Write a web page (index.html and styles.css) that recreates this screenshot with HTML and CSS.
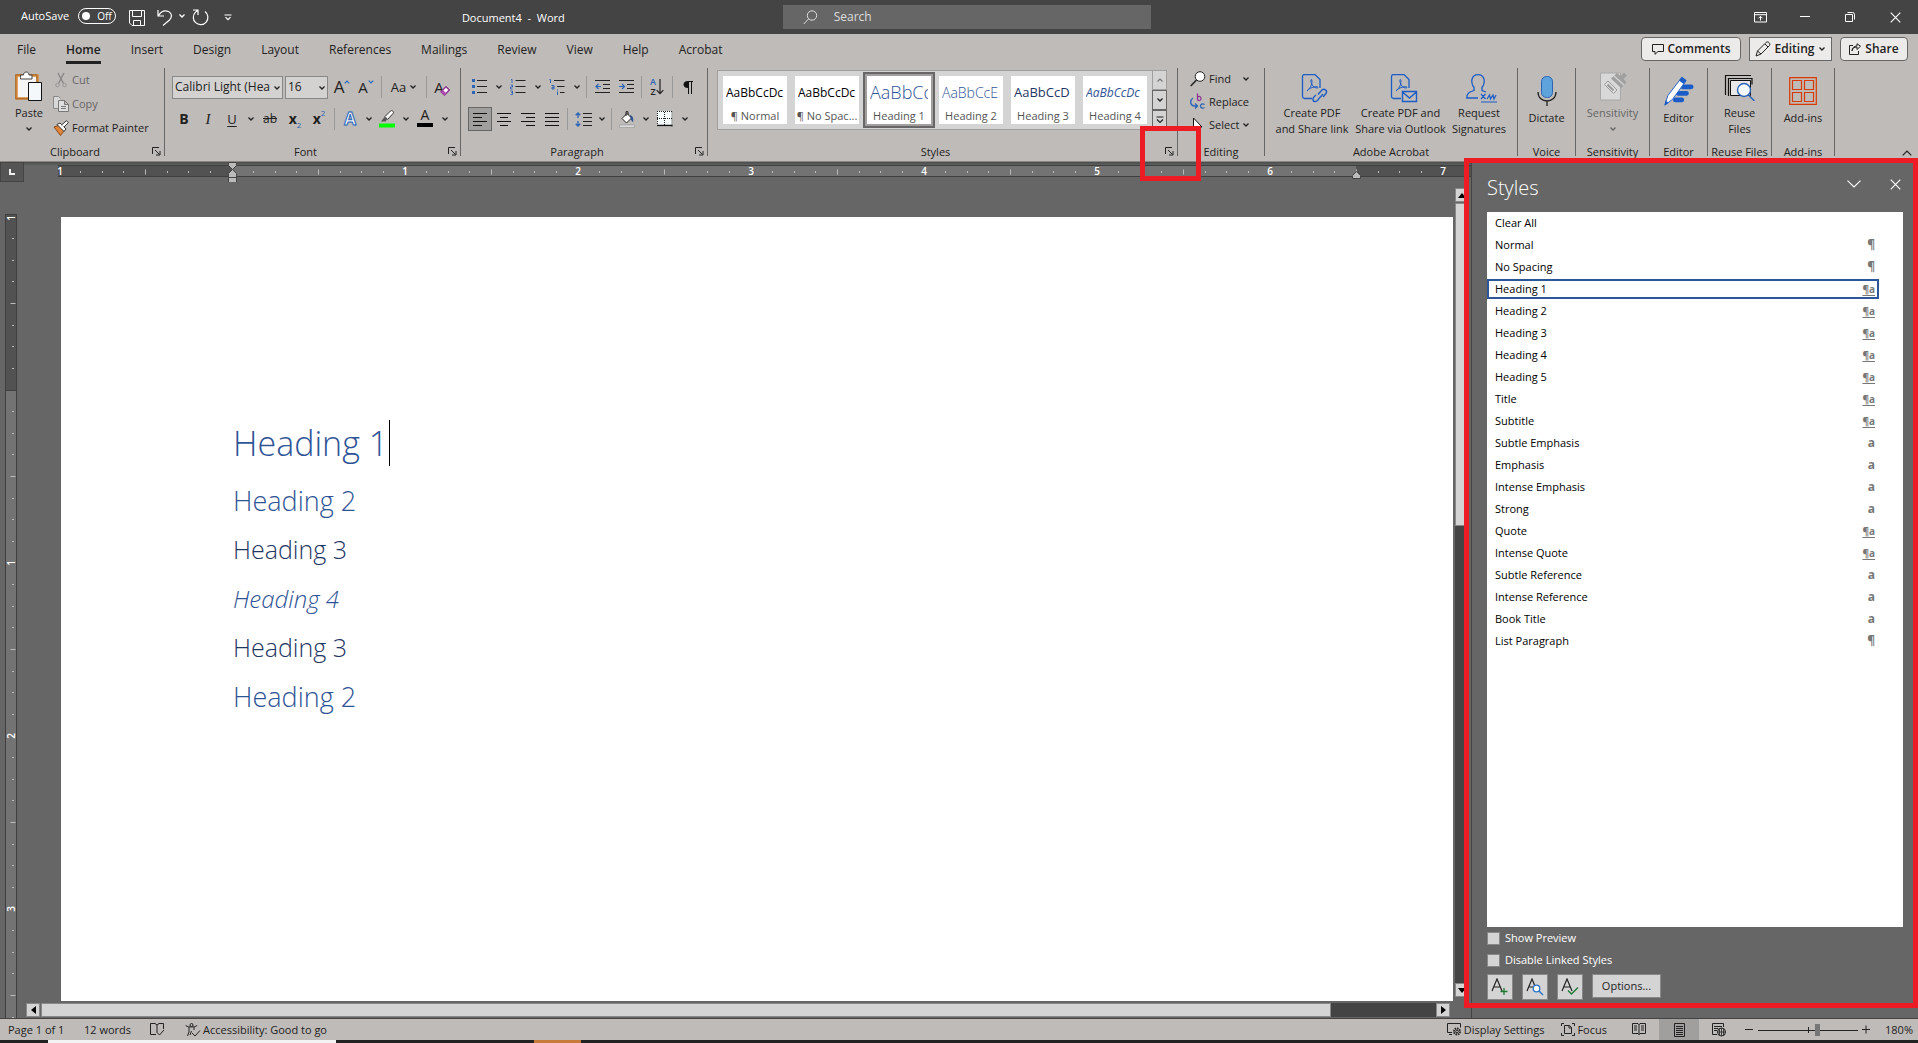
FILE: index.html
```html
<!DOCTYPE html>
<html lang="en">
<head>
    <meta charset="UTF-8">
    <meta name="viewport" content="width=device-width, initial-scale=1.0">
    <title>Document4 - Word</title>
    <link rel="stylesheet" href="styles.css">
</head>
<body>
    <!-- Shared icons -->
    <svg class="defs" width="0" height="0">
        <symbol id="chev" viewBox="0 0 8 6"><path d="M1.5 1.5 4 4l2.5-2.5" fill="none" stroke="currentColor" stroke-width="1.3"/></symbol>
        <symbol id="launch" viewBox="0 0 9 9"><path d="M.5 7V.5H7M3 3l4.5 4.5M8 4v4H4" fill="none" stroke="currentColor"/></symbol>
        <symbol id="close" viewBox="0 0 11 11"><path d="M.7.7l9.6 9.6M10.3.7.7 10.3" fill="none" stroke="currentColor" stroke-width="1.1"/></symbol>
        <symbol id="pdf" viewBox="0 0 28 30">
            <path d="M11 24.5H3.5a2 2 0 0 1-2-2v-20a2 2 0 0 1 2-2H14l5 5V14" fill="none" stroke="currentColor" stroke-width="1.3"/>
            <path d="M6 17c4-3 5.500-8 4.800-11-.5-1.500-1.600 0-.6 2.500 1 3.500 3 5.500 6 5.500 1.500 0 1-1.400-1-1.300-3 .2-6 1.300-8.700 3.300" fill="none" stroke="currentColor"/>
        </symbol>
    </svg>

    <header class="titlebar">
        <div class="quick">
            <span class="autosave">AutoSave</span>
            <button class="toggle"><i></i>Off</button>
            <button class="qbtn" aria-label="Save"><svg width="16" height="16" viewBox="0 0 16 16"><path d="M.5.5h15v15H3l-2.500-2.500zM3.500.5v6h9v-6M4.500 15.500v-5h7v5" fill="none" stroke="#fff"/></svg></button>
            <button class="qbtn" aria-label="Undo"><svg width="16" height="17" viewBox="0 0 16 17"><path d="M1 1v6h6M1.500 6.500C4 2.500 8 1 11.500 2.500c4 2 3.500 6 1 8.500L6 16.500" fill="none" stroke="#fff" stroke-width="1.200"/></svg></button>
            <button class="arrow" aria-label="Undo list"><svg width="8" height="6"><use href="#chev"/></svg></button>
            <button class="qbtn" aria-label="Redo"><svg width="17" height="17" viewBox="0 0 17 17"><path d="M1 1h5v5M13 2.500a7.300 7.300 0 1 1-9.500.6L6 1" fill="none" stroke="#fff" stroke-width="1.200"/></svg></button>
            <button class="qbtn" aria-label="Customize"><svg width="8" height="7" viewBox="0 0 8 7"><path d="M.5 1h7M1.500 3.200 4 5.700l2.500-2.500" fill="none" stroke="#fff" stroke-width="1.200"/></svg></button>
            <span class="doc-name">Document4&nbsp; - &nbsp;Word</span>
        </div>
        <label class="search">
            <svg width="15" height="15" viewBox="0 0 15 15"><circle cx="9" cy="5.500" r="4.700" fill="none" stroke="#ddd"/><path d="M5.500 9 .7 14" stroke="#ddd"/></svg>
            <input type="text" placeholder="Search" aria-label="Search">
        </label>
        <div class="window-btns">
            <button aria-label="Ribbon options"><svg width="13" height="11" viewBox="0 0 13 11"><path d="M.5.5h12v9.500H.5zM.5 2.700h12M6.500 8.500V4.500M4.500 6.300l2-2 2 2" fill="none" stroke="#fff"/></svg></button>
            <button aria-label="Minimize"><svg width="10" height="2" viewBox="0 0 10 2"><path d="M0 .5h10" stroke="#fff"/></svg></button>
            <button aria-label="Restore"><svg width="10" height="10" viewBox="0 0 10 10"><path d="M.5 2.500h7v7h-7zM2.500.5h5a2 2 0 0 1 2 2v5" fill="none" stroke="#fff"/></svg></button>
            <button aria-label="Close"><svg width="11" height="11"><use href="#close"/></svg></button>
        </div>
    </header>

    <nav class="tabs">
        <a href="#">File</a>
        <a href="#" class="active">Home</a>
        <a href="#">Insert</a>
        <a href="#">Design</a>
        <a href="#">Layout</a>
        <a href="#">References</a>
        <a href="#">Mailings</a>
        <a href="#">Review</a>
        <a href="#">View</a>
        <a href="#">Help</a>
        <a href="#">Acrobat</a>
        <div class="tab-actions">
            <button class="comments"><svg width="12" height="11" viewBox="0 0 12 11"><path d="M.5.5h11v7H6L3 10.300V7.500H.5z" fill="none" stroke="#222"/></svg>Comments</button>
            <button class="mode"><svg width="16" height="16" viewBox="0 0 16 16"><path d="M1 15l1.500-5L11 1.500c2-2 5 1.500 3.500 3L6 13zM2.500 10 6 13M10 3l3 3" fill="none" stroke="#222"/></svg>Editing<svg width="8" height="6"><use href="#chev"/></svg></button>
            <button class="share"><svg width="12" height="12" viewBox="0 0 12 12"><path d="M4 2.500H.5v9h9V8M3 8c.5-3 2-4 5-4v2.500l3.500-3.300L8 .7V3C5 3 3 5 3 8z" fill="none" stroke="#222"/></svg>Share</button>
        </div>
    </nav>

    <section class="ribbon">
        <div class="group clipboard">
            <div class="group-body">
                <button class="big paste">
                    <svg width="28" height="30" viewBox="0 0 28 30"><path d="M1.500 4.500h21v23h-21z" fill="#f5f5f5" stroke="#d4893b" stroke-width="2.500"/><path d="M.7 3.700h21v24H.7z" fill="none" stroke="#9b5a1f" stroke-width=".7"/><path d="M5.500 6.500V4h3c0-4 5.500-4 5.500 0h3v4h-11.500z" fill="#fff" stroke="#444"/><path d="M13.500 11.500h13v18h-13z" fill="#f5f8fa" stroke="#111"/></svg>
                    Paste
                    <svg width="8" height="6"><use href="#chev"/></svg>
                </button>
                <div class="stack">
                    <button class="small off"><svg width="16" height="16" viewBox="0 0 16 16"><path d="M5 1l5.500 10.500M11 1 5.500 11.500" stroke="#888" fill="none" stroke-width="1.400"/><circle cx="4.500" cy="13" r="1.800" fill="none" stroke="#999"/><circle cx="11.500" cy="13" r="1.800" fill="none" stroke="#999"/></svg>Cut</button>
                    <button class="small off"><svg width="16" height="16" viewBox="0 0 16 16"><path d="M5.500 12.500h-5V.5h5l2 2" fill="#d8d8d8" stroke="#888"/><path d="M5.500 4.500h6l4 4v7h-10zM11.500 4.500v4h4M8 10.500h5M8 12.500h5" fill="#e0e0e0" stroke="#777"/></svg>Copy</button>
                    <button class="small"><svg width="16" height="16" viewBox="0 0 16 16"><path d="M1 7l6-2 4 6-3.500 4.500z" fill="#e0853a" stroke="#8a4a18"/><path d="M4 4.500 7 3l6 6-2 2.500z" fill="#fff" stroke="#333"/><path d="M8.500 5 13.500.7l1.800 2L11 7" fill="#fff" stroke="#333"/></svg>Format Painter</button>
                </div>
            </div>
            <div class="group-name">Clipboard<button class="launcher" aria-label="Clipboard settings"><svg width="9" height="9"><use href="#launch"/></svg></button></div>
        </div>

        <div class="group font">
            <div class="rows">
                <div class="row">
                    <span class="combo combo-font"><select aria-label="Font"><option>Calibri Light (Hea</option></select><svg width="8" height="6"><use href="#chev"/></svg></span>
                    <span class="combo combo-size"><select aria-label="Font size"><option>16</option></select><svg width="8" height="6"><use href="#chev"/></svg></span>
                    <button class="tool glyph"><b class="big-a">A</b><svg class="up" width="6" height="4" viewBox="0 0 6 4"><path d="M.7 3.300 3 1l2.300 2.300" fill="none" stroke="#2b6cc4" stroke-width="1.200"/></svg></button>
                    <button class="tool glyph"><b class="small-a">A</b><svg class="up" width="6" height="4" viewBox="0 0 6 4"><path d="M.7.7 3 3 5.300.7" fill="none" stroke="#2b6cc4" stroke-width="1.200"/></svg></button>
                    <i class="sep"></i>
                    <button class="tool case">Aa<svg width="8" height="6"><use href="#chev"/></svg></button>
                    <i class="sep"></i>
                    <button class="tool glyph clear-fmt"><b class="small-a">A</b><svg width="10" height="10" viewBox="0 0 10 10"><path d="M6 .8 9.300 4 4.500 9 1 5.800z" fill="#fff" stroke="#8d2d91" stroke-width="1.300"/><path d="M3 4l3.300 3.300L4.500 9 1 5.800z" fill="#b14fb5"/></svg></button>
                </div>
                <div class="row">
                    <button class="tool bold">B</button>
                    <button class="tool italic">I</button>
                    <button class="tool under">U</button>
                    <button class="arrow" aria-label="Underline styles"><svg width="8" height="6"><use href="#chev"/></svg></button>
                    <button class="tool wide strike">ab</button>
                    <button class="tool bold">x<sub>2</sub></button>
                    <button class="tool bold">x<sup>2</sup></button>
                    <i class="sep"></i>
                    <button class="tool effect">A</button>
                    <button class="arrow" aria-label="Text effects"><svg width="8" height="6"><use href="#chev"/></svg></button>
                    <button class="tool" aria-label="Highlight"><svg width="16" height="18" viewBox="0 0 16 18"><path d="M6 6.500 11.500 1c1.500-1.300 4 1 2.500 2.500L8.500 9.500z" fill="#fff" stroke="#333"/><path d="M5.500 7 8 9.500l-1.500 2H2z" fill="#555"/><path d="M0 13.500h16v4H0z" fill="#0f0"/></svg></button>
                    <button class="arrow" aria-label="Highlight colors"><svg width="8" height="6"><use href="#chev"/></svg></button>
                    <button class="tool wide color-a">A</button>
                    <button class="arrow" aria-label="Font colors"><svg width="8" height="6"><use href="#chev"/></svg></button>
                </div>
            </div>
            <div class="group-name">Font<button class="launcher" aria-label="Font settings"><svg width="9" height="9"><use href="#launch"/></svg></button></div>
        </div>

        <div class="group para">
            <div class="rows">
                <div class="row">
                    <button class="tool" aria-label="Bullets"><svg width="16" height="16" viewBox="0 0 16 16"><path d="M0 0h3v3H0zM0 6h3v3H0zM0 12h3v3H0z" fill="#2b63b5"/><path d="M5 1.500h10M5 7.500h10M5 13.500h10" stroke="#222"/></svg></button>
                    <button class="arrow" aria-label="Bullet styles"><svg width="8" height="6"><use href="#chev"/></svg></button>
                    <button class="tool wide" aria-label="Numbering"><svg width="16" height="16" viewBox="0 0 16 16"><path d="M1 .5h1V4M.5 6h2v2h-2v2h2M.5 12h2v1.500h-1 1v2h-2" fill="none" stroke="#2b63b5" stroke-width=".9"/><path d="M5.500 1.500h10M5.500 7.500h10M5.500 13.500h10" stroke="#222"/></svg></button>
                    <button class="arrow" aria-label="Number styles"><svg width="8" height="6"><use href="#chev"/></svg></button>
                    <button class="tool wide" aria-label="Multilevel list"><svg width="16" height="17" viewBox="0 0 16 17"><path d="M.5.5h1V4M2.500 6.500h2.500V10H3V8.300h2M8.500 12.500V16M8.500 10.500v1" fill="none" stroke="#2b63b5"/><path d="M5 1.500h10.500M8 7.500h7.500M11 13.500h4.500" stroke="#222"/></svg></button>
                    <button class="arrow" aria-label="List styles"><svg width="8" height="6"><use href="#chev"/></svg></button>
                    <i class="sep"></i>
                    <button class="tool" aria-label="Decrease indent"><svg width="15" height="14" viewBox="0 0 15 14"><path d="M0 .5h15M8 4.500h7M8 8.500h7M0 12.500h15" stroke="#222"/><path d="M6 6.500H1M3.500 4 1 6.500 3.500 9" fill="none" stroke="#2b63b5" stroke-width="1.200"/></svg></button>
                    <button class="tool" aria-label="Increase indent"><svg width="15" height="14" viewBox="0 0 15 14"><path d="M0 .5h15M8 4.500h7M8 8.500h7M0 12.500h15" stroke="#222"/><path d="M0 6.500h5.500M3 4l2.500 2.500L3 9" fill="none" stroke="#2b63b5" stroke-width="1.200"/></svg></button>
                    <i class="sep"></i>
                    <button class="tool sort" aria-label="Sort"><span><b>A</b><b>Z</b></span><svg width="8" height="16" viewBox="0 0 8 16"><path d="M4 0v14.500M.7 11.200 4 14.700l3.300-3.500" fill="none" stroke="#222" stroke-width="1.200"/></svg></button>
                    <i class="sep"></i>
                    <button class="tool" aria-label="Show marks"><svg width="10" height="13" viewBox="0 0 10 13"><path d="M5 0h5v1H9v12H8V1H6v12H5V7C-1 7-1 0 5 0z" fill="#111"/></svg></button>
                </div>
                <div class="row">
                    <button class="tool pressed" aria-label="Align left"><svg width="14" height="13" viewBox="0 0 14 13"><path d="M0 .5h14M0 4.500h9M0 8.500h14M0 12.500h9" stroke="#111"/></svg></button>
                    <button class="tool" aria-label="Center"><svg width="14" height="13" viewBox="0 0 14 13"><path d="M0 .5h14M3 4.500h8M0 8.500h14M3 12.500h8" stroke="#111"/></svg></button>
                    <button class="tool" aria-label="Align right"><svg width="14" height="13" viewBox="0 0 14 13"><path d="M0 .5h14M5 4.500h9M0 8.500h14M5 12.500h9" stroke="#111"/></svg></button>
                    <button class="tool" aria-label="Justify"><svg width="14" height="13" viewBox="0 0 14 13"><path d="M0 .5h14M0 4.500h14M0 8.500h14M0 12.500h14" stroke="#111"/></svg></button>
                    <i class="sep"></i>
                    <button class="tool" aria-label="Line spacing"><svg width="17" height="15" viewBox="0 0 17 15"><path d="M3 1v5M3 9v5M.7 3.300 3 1l2.300 2.300M.7 11.700 3 14l2.300-2.300" fill="none" stroke="#2b63b5" stroke-width="1.300"/><path d="M8 1.500h9M8 5.500h9M8 9.500h9M8 13.500h9" stroke="#222"/></svg></button>
                    <button class="arrow" aria-label="Spacing options"><svg width="8" height="6"><use href="#chev"/></svg></button>
                    <i class="sep"></i>
                    <button class="tool" aria-label="Shading"><svg width="16" height="17" viewBox="0 0 16 17"><path d="M3 7.500 8 2.500l4.500 4.500L7.500 12z" fill="#fff" stroke="#222"/><path d="M7 5V.7h2V4" fill="none" stroke="#222"/><path d="M11 4.500c2.500.5 3 2.500 2.700 6L12 8" fill="#2b4f8f" stroke="#2b4f8f"/><path d="M.5 14h15v2.500H.5z" fill="#ddd" stroke="#999" stroke-width=".7"/></svg></button>
                    <button class="arrow" aria-label="Shading colors"><svg width="8" height="6"><use href="#chev"/></svg></button>
                    <button class="tool wide" aria-label="Borders"><svg width="16" height="16" viewBox="0 0 16 16"><path d="M0 0h15.500v15.500H0z" fill="#f5fafa"/><path d="M0 .5h15M.5 0v15M15 .5v15M7.500 1v14M0 7.500h15" stroke="#222" stroke-dasharray="1 1"/><path d="M0 14.500h15.500" stroke="#111" stroke-width="1.500"/></svg></button>
                    <button class="arrow" aria-label="Border options"><svg width="8" height="6"><use href="#chev"/></svg></button>
                </div>
            </div>
            <div class="group-name">Paragraph<button class="launcher" aria-label="Paragraph settings"><svg width="9" height="9"><use href="#launch"/></svg></button></div>
        </div>

        <div class="group styles">
            <div class="gallery">
                <button class="style"><span><em>AaBbCcDc</em>¶ Normal</span></button>
                <button class="style"><span><em>AaBbCcDc</em>¶ No Spac...</span></button>
                <button class="style selected"><span><em class="s1">AaBbCc</em>Heading 1</span></button>
                <button class="style"><span><em class="s2">AaBbCcE</em>Heading 2</span></button>
                <button class="style"><span><em class="s3">AaBbCcD</em>Heading 3</span></button>
                <button class="style"><span><em class="s4">AaBbCcDc</em>Heading 4</span></button>
                <div class="gallery-nav">
                    <button class="dim" aria-label="Previous"><svg width="8" height="6" viewBox="0 0 8 6"><path d="M1.500 4.500 4 2l2.500 2.500" fill="none" stroke="currentColor" stroke-width="1.200"/></svg></button>
                    <button aria-label="Next"><svg width="8" height="6"><use href="#chev"/></svg></button>
                    <button aria-label="More"><svg width="8" height="8" viewBox="0 0 8 8"><path d="M.5 1h7M1 3.500l3 3 3-3" fill="none" stroke="currentColor" stroke-width="1.200"/></svg></button>
                </div>
            </div>
            <div class="group-name">Styles<button class="launcher" aria-label="Styles pane"><svg width="9" height="9"><use href="#launch"/></svg></button></div>
            <div class="callout"></div>
        </div>

        <div class="group editing">
            <div class="stack">
                <button class="small"><svg width="16" height="16" viewBox="0 0 16 16"><circle cx="10" cy="5.500" r="4.800" fill="#fff" stroke="#222"/><path d="M6.500 9 .7 15" stroke="#222" stroke-width="1.500"/></svg>Find<svg class="far" width="8" height="6"><use href="#chev"/></svg></button>
                <button class="small"><svg width="16" height="17" viewBox="0 0 16 17"><path d="M7.500.5v7M7.500 4.500c1-1.500 3.500-1.500 3.500 1s-2.500 2.500-3.500 1" fill="none" stroke="#8d2d91" stroke-width="1.200"/><path d="M14.500 11.500c-2.500-1.500-4 0-4 1.500s1.500 3 4 1.500" fill="none" stroke="#2b63b5" stroke-width="1.200"/><path d="M3 5C0 7-.5 12 4 13h3M5 10.500 7.500 13 5 15.500" fill="none" stroke="#2b63b5" stroke-width="1.300"/></svg>Replace</button>
                <button class="small"><svg width="16" height="16" viewBox="0 0 16 16"><path d="M3.500 1v13l3-3.500 2 4.500 2-1-2-4H12z" fill="#fff" stroke="#111"/></svg>Select<svg width="8" height="6"><use href="#chev"/></svg></button>
            </div>
            <div class="group-name">Editing</div>
        </div>

        <div class="group acrobat">
            <div class="group-body">
                <button class="big a1"><svg width="28" height="30"><use href="#pdf"/><g fill="none" stroke="currentColor" stroke-width="1.400"><path d="M17 20.500l4-4.500c2-2 6 .5 4 3.500l-3 3.500M22 20l-4.500 5c-1 3-5 3.500-5.500 1-.5-2 1-3.500 3-5"/></g></svg>Create PDF<br>and Share link</button>
                <button class="big a2"><svg width="28" height="30"><use href="#pdf"/><path d="M12.500 17.500h14v10h-14zM12.500 18l7 6 7-6" fill="none" stroke="currentColor" stroke-width="1.400"/></svg>Create PDF and<br>Share via Outlook</button>
                <button class="big a3"><svg width="32" height="30" viewBox="0 0 32 30"><path d="M12 24H.8c0-5 2.500-6 7.200-7.500v-3C4 8 5.500.7 12 .7S20 8 16 13.500v3l4 1.500" fill="none" stroke="currentColor" stroke-width="1.300"/><path d="M15 20l4.500 5M19.500 20 15 25M21 25l2.500-4 1 4 2.500-4 1 4 2-4M15 28h16" fill="none" stroke="currentColor" stroke-width="1.200"/></svg>Request<br>Signatures</button>
            </div>
            <div class="group-name">Adobe Acrobat</div>
        </div>

        <div class="group voice">
            <button class="big"><svg width="20" height="30" viewBox="0 0 20 30"><rect x="4.500" y=".5" width="11" height="21" rx="5" fill="#5ea3dc" stroke="#2b63b5"/><path d="M1 16c0 12 18 12 18 0M10 25v5" fill="none" stroke="#222" stroke-width="1.300"/></svg>Dictate</button>
            <div class="group-name">Voice</div>
        </div>

        <div class="group sens">
            <button class="big off"><svg width="28" height="30" viewBox="0 0 28 30"><path d="M1.500 2h20v27h-20z" fill="#d8d8d8" stroke="#a8a8a8"/><path d="M5.500 13.500 9 10l9 9-3.500 3.500z" fill="#ddd" stroke="#999"/><path d="M8.500 13.500l6 6" stroke="#999" stroke-width="2"/><path d="M12 7.500 18 2l3.500 3L25 1.500l3 3L24.500 8l3 3.500L22 17z" fill="#a0a0a0"/><path d="M15 5l10 9" stroke="#d0d0d0" stroke-width="1.500"/></svg>Sensitivity<svg width="8" height="6"><use href="#chev"/></svg></button>
            <div class="group-name">Sensitivity</div>
        </div>

        <div class="group editor">
            <button class="big"><svg width="32" height="32" viewBox="0 0 32 32"><path d="M20 11.500h9M15 18.500h9M12 25.500h7" stroke="#1b5cc7" stroke-width="5" stroke-linecap="round"/><path d="M19 1.500 23.500 5 9 25 1 31l3-10z" fill="#fff" stroke="#1b5cc7"/><path d="M19 .8 24 4.500l-3 4-5-3.800zM1.500 26l3.500 2.500-4.500 3z" fill="#1b5cc7"/></svg>Editor</button>
            <div class="group-name">Editor</div>
        </div>

        <div class="group reuse">
            <button class="big"><svg width="32" height="30" viewBox="0 0 32 30"><path d="M1.500 24V4.500H27M4.500 25V7.500H28v6" fill="none" stroke="#111" stroke-width="1.200"/><path d="M6.500 9.500h20v15h-20z" fill="#e8e8e8" stroke="#111"/><circle cx="20" cy="19" r="6.500" fill="#f4faff" stroke="#2b63b5" stroke-width="1.400"/><path d="M24.500 24l6 6" stroke="#2b63b5" stroke-width="1.500"/></svg>Reuse<br>Files</button>
            <div class="group-name">Reuse Files</div>
        </div>

        <div class="group addins">
            <button class="big"><svg width="28" height="30" viewBox="0 0 28 30"><path d="M.7 1.700h26.600v26.600H.7zM3.500 4.500h9v9h-9zM15.500 4.500h9v9h-9zM3.500 16.500h9v9h-9zM15.500 16.500h9v9h-9z" fill="none" stroke="#d83b01" stroke-width="1.200"/></svg>Add-ins</button>
            <div class="group-name">Add-ins</div>
        </div>
        <button class="collapse" aria-label="Collapse ribbon"><svg width="10" height="6" viewBox="0 0 10 6"><path d="M.7 5.300 5 1l4.300 4.300" fill="none" stroke="#222" stroke-width="1.200"/></svg></button>
    </section>

    <main class="work">
        <section class="doc">
            <div class="ruler-row">
                <button class="tab-stop" aria-label="Tab stop"><i></i></button>
                <!-- one inch is 173 units -->
                <svg class="ruler-h" height="20">
                    <defs>
                        <pattern id="inch" x="1" width="173" height="20" patternUnits="userSpaceOnUse">
                            <path d="M21.500 9v2M43.500 9v2M64.500 9v2M108.500 9v2M129.500 9v2M151.500 9v2M86.500 7.500v5" stroke="#bbb"/>
                        </pattern>
                    </defs>
                    <rect x="0" y="3" width="174" height="12" fill="#525252"/>
                    <rect x="174" y="3" width="1124" height="12" fill="#737373"/>
                    <rect x="1298" y="3" width="300" height="12" fill="#525252"/>
                    <path d="M0 3.500h1600M0 14.500h1600" stroke="#3f3f3f"/>
                    <rect width="1600" height="20" fill="url(#inch)"/>
                    <g class="nums">
                        <text x="2" y="13">1</text><text x="347" y="13">1</text><text x="520" y="13">2</text><text x="693" y="13">3</text>
                        <text x="866" y="13">4</text><text x="1039" y="13">5</text><text x="1212" y="13">6</text><text x="1385" y="13">7</text>
                    </g>
                    <g fill="#bbb" stroke="#444">
                        <path d="M170.500.5h8v3l-4 4-4-4zM170.500 15.500v-4l4-4 4 4v4zM170.500 15.500h8v5h-8z"/>
                        <path d="M1294.500 16.500v-3l4-4 4 4v3z"/>
                    </g>
                </svg>
            </div>
            <div class="doc-body">
                <svg class="ruler-v" width="12">
                    <defs>
                        <pattern id="vinch" y="3" width="12" height="173" patternUnits="userSpaceOnUse">
                            <path d="M7 21.500h2M7 43.500h2M7 64.500h2M7 108.500h2M7 129.500h2M7 151.500h2M5.500 86.500h5" stroke="#bbb"/>
                        </pattern>
                    </defs>
                    <rect width="12" height="176" fill="#525252"/>
                    <rect y="176" width="12" height="700" fill="#737373"/>
                    <path d="M.5.5h11M.5 0v900M11.500 0v900M0 176.500h12" stroke="#3f3f3f" fill="none"/>
                    <rect width="12" height="900" fill="url(#vinch)"/>
                    <g class="nums">
                        <text transform="translate(10 4) rotate(-90)">1</text><text transform="translate(10 349) rotate(-90)">1</text>
                        <text transform="translate(10 522) rotate(-90)">2</text><text transform="translate(10 695) rotate(-90)">3</text>
                    </g>
                </svg>
                <article class="page">
                    <h1>Heading 1<i class="cursor"></i></h1>
                    <h2>Heading 2</h2>
                    <h3>Heading 3</h3>
                    <h4>Heading 4</h4>
                    <h3>Heading 3</h3>
                    <h2>Heading 2</h2>
                </article>
                <div class="scroll-v">
                    <button aria-label="Scroll up"><svg width="8" height="5"><path d="M0 5 4 0l4 5z"/></svg></button>
                    <div class="thumb"></div>
                    <div class="track"></div>
                    <button aria-label="Scroll down"><svg width="8" height="5"><path d="M0 0l4 5 4-5z"/></svg></button>
                </div>
            </div>
            <div class="scroll-h">
                <button aria-label="Scroll left"><svg width="5" height="8"><path d="M5 0 0 4l5 4z"/></svg></button>
                <div class="thumb"></div>
                <div class="track"></div>
                <button aria-label="Scroll right"><svg width="5" height="8"><path d="M0 0l5 4-5 4z"/></svg></button>
            </div>
        </section>

        <aside class="pane">
            <div class="pane-head">
                <h2>Styles</h2>
                <button aria-label="Pane options"><svg width="14" height="8" viewBox="0 0 14 8"><path d="M.5.7 7 7 13.500.7" fill="none" stroke="#fff" stroke-width="1.100"/></svg></button>
                <button aria-label="Close pane"><svg width="11" height="11"><use href="#close"/></svg></button>
            </div>
            <ul class="style-list">
                <li>Clear All</li>
                <li>Normal<b>¶</b></li>
                <li>No Spacing<b>¶</b></li>
                <li class="selected">Heading 1<u>¶a</u></li>
                <li>Heading 2<u>¶a</u></li>
                <li>Heading 3<u>¶a</u></li>
                <li>Heading 4<u>¶a</u></li>
                <li>Heading 5<u>¶a</u></li>
                <li>Title<u>¶a</u></li>
                <li>Subtitle<u>¶a</u></li>
                <li>Subtle Emphasis<b>a</b></li>
                <li>Emphasis<b>a</b></li>
                <li>Intense Emphasis<b>a</b></li>
                <li>Strong<b>a</b></li>
                <li>Quote<u>¶a</u></li>
                <li>Intense Quote<u>¶a</u></li>
                <li>Subtle Reference<b>a</b></li>
                <li>Intense Reference<b>a</b></li>
                <li>Book Title<b>a</b></li>
                <li>List Paragraph<b>¶</b></li>
            </ul>
            <label class="check"><input type="checkbox">Show Preview</label>
            <label class="check"><input type="checkbox">Disable Linked Styles</label>
            <div class="pane-btns">
                <button class="sq" aria-label="New style"><svg width="18" height="18" viewBox="0 0 18 18"><path d="M1 13 6 1l5 12M3 9h6" fill="none" stroke="#222" stroke-width="1.200"/><path d="M9.500 13.500h7M13 10v7" stroke="#1e7b34" stroke-width="1.300"/></svg></button>
                <button class="sq" aria-label="Style inspector"><svg width="18" height="18" viewBox="0 0 18 18"><path d="M1 13 6 1l2.500 6M3 9h4" fill="none" stroke="#222" stroke-width="1.200"/><circle cx="10.500" cy="10.500" r="3.300" fill="#fff" stroke="#2b73c9" stroke-width="1.300"/><path d="M13 13l4 4" stroke="#2b73c9" stroke-width="1.400"/></svg></button>
                <button class="sq" aria-label="Manage styles"><svg width="18" height="18" viewBox="0 0 18 18"><path d="M1 13 6 1l5 12M3 9h6" fill="none" stroke="#222" stroke-width="1.200"/><path d="M7 12.500l3.500 3.500L17 9.500" fill="none" stroke="#1e7b34" stroke-width="1.400"/></svg></button>
                <button class="options">Options...</button>
            </div>
        </aside>
    </main>

    <footer class="status">
        <span class="pages">Page 1 of 1</span>
        <span class="words">12 words</span>
        <button class="proof" aria-label="Proofing"><svg width="15" height="13" viewBox="0 0 15 13"><path d="M6 11.500H.5V.5H5l2 1.500L9 .5h4.500V6M7 2v7M6.500 9l3 3L14 7" fill="none" stroke="#222"/></svg></button>
        <button class="access"><svg width="16" height="14" viewBox="0 0 16 14"><circle cx="6.500" cy="2" r="1.500" fill="none" stroke="#222"/><path d="M.7 2.500c3 2 8.500 2 11.500 0M4 4v5l-1.500 4M9 4v3M6.500 8 5 12M7 10l3 3 5-5.500" fill="none" stroke="#222"/></svg>Accessibility: Good to go</button>
        <div class="status-right">
            <button class="display"><svg width="15" height="13" viewBox="0 0 15 13"><path d="M5 9.500H.5v-9h13v4M2 11.500h3" fill="none" stroke="#222"/><circle cx="10" cy="8.500" r="3" fill="none" stroke="#222" stroke-width="2" stroke-dasharray="1.500 .8"/><circle cx="10" cy="8.500" r="1.300" fill="none" stroke="#222"/></svg>Display Settings</button>
            <button class="focus"><svg width="14" height="13" viewBox="0 0 14 13"><path d="M3 .5H.5V3M11 .5h2.500V3M3 12.500H.5V10M11 12.500h2.500V10M3.500 2.500h5l2 2v6h-7zM8 2.500V5h2.500" fill="none" stroke="#222"/></svg>Focus</button>
            <button class="view" aria-label="Read mode"><svg width="14" height="13" viewBox="0 0 14 13"><path d="M.5.5H6l1 1 1-1h5.500v10H8l-1 1-1-1H.5zM7 1v11M2 3h3M2 5h3M2 7h3M9 3h3M9 5h3M9 7h3" fill="none" stroke="#222"/></svg></button>
            <button class="view on" aria-label="Print layout"><svg width="11" height="14" viewBox="0 0 11 14"><path d="M.5.5h10v13H.5zM2 3.500h7M2 5.500h7M2 7.500h7M2 9.500h7M2 11.500h7" fill="none" stroke="#222"/></svg></button>
            <button class="view" aria-label="Web layout"><svg width="14" height="14" viewBox="0 0 14 14"><path d="M5 11.500H.5V.5h11V4M2 3.500h8M2 5.500h4M2 7.500h3" fill="none" stroke="#222"/><circle cx="9.500" cy="9" r="4" fill="none" stroke="#222"/><path d="M5.500 9h8M9.500 5v8M7.500 6v6M11.500 6v6" stroke="#222" stroke-width=".8"/></svg></button>
            <button class="zoom-btn" aria-label="Zoom out"><svg width="9" height="9"><path d="M0 4.500h8" stroke="#222"/></svg></button>
            <input class="zoom" type="range" min="0" max="100" value="60" aria-label="Zoom">
            <button class="zoom-btn" aria-label="Zoom in"><svg width="9" height="9"><path d="M0 4.500h8M4 .5v8" stroke="#222"/></svg></button>
            <span class="percent">180%</span>
        </div>
    </footer>
    <div class="taskbar"><i class="window"></i><i class="app"></i></div>
</body>
</html>
```
FILE: styles.css
```css
* {
    box-sizing: border-box;
}
body {
    display: flex;
    flex-direction: column;
    height: 100vh;
    margin: 0;
    overflow: hidden;
    background-color: #666;
    color: #222;
    font-family: "Open Sans", "Noto Sans", sans-serif;
    font-size: 11px;
    line-height: 16px;
}
button, input, select {
    font: inherit;
    color: inherit;
}
button {
    display: flex;
    align-items: center;
    justify-content: center;
    margin: 0;
    padding: 0;
    border: none;
    background: none;
    white-space: nowrap;
}
svg {
    flex: none;
    display: block;
}
.defs {
    position: absolute;
}

/* Title bar */
.titlebar {
    display: grid;
    grid-template-columns: 1.02fr 368px 1fr;
    align-items: center;
    flex: none;
    height: 34px;
    background-color: #444;
    color: #fff;
}
.quick {
    display: flex;
    align-items: center;
    padding: 0 0 2px 21px;
}
.autosave {
    width: 57px;
}
.toggle {
    gap: 7px;
    width: 38px;
    height: 16px;
    margin-right: 9px;
    border: 1px solid #fff;
    border-radius: 8px;
    font-size: 10px;
}
.toggle i {
    width: 8px;
    height: 8px;
    border-radius: 50%;
    background-color: #fff;
}
.qbtn {
    width: 24px;
    margin-right: 4px;
    padding-top: 3px;
}
.arrow {
    flex: none;
    width: 13px;
    height: 22px;
}
.quick .arrow {
    margin: 0 0 0 -6px;
}
.doc-name {
    flex: 1;
    padding-top: 3px;
    text-align: center;
}
.search {
    display: flex;
    align-items: center;
    gap: 16px;
    height: 24px;
    padding-left: 20px;
    background-color: #666;
}
.search input {
    width: 200px;
    padding: 0;
    border: none;
    background: none;
    font-size: 12px;
}
.search input::placeholder {
    color: #ddd;
}
.window-btns {
    display: flex;
    justify-content: flex-end;
}
.window-btns button {
    width: 45px;
    height: 30px;
}

/* Tabs */
.tabs {
    display: flex;
    align-items: center;
    gap: 30px;
    flex: none;
    height: 34px;
    padding: 0 10px 0 17px;
    background-color: #bfbbb8;
    font-size: 12px;
}
.tabs a {
    padding: 4px 0 3px;
    border-bottom: 3px solid transparent;
    color: #222;
    text-decoration: none;
}
.tabs .active {
    border-bottom-color: #222;
    font-weight: 600;
}
.tab-actions {
    display: flex;
    gap: 8px;
    margin-left: auto;
    padding-bottom: 4px;
}
.tab-actions button {
    gap: 4px;
    height: 24px;
    border: 1px solid #666;
    border-radius: 4px;
    background-color: #edebe9;
    font-weight: 600;
}
.tab-actions .comments {
    width: 100px;
}
.tab-actions .mode {
    width: 83px;
    border-radius: 0;
}
.tab-actions .share {
    width: 68px;
}

/* Ribbon */
.ribbon {
    display: flex;
    flex: none;
    height: 94px;
    padding-bottom: 5px;
    background-color: #bfbbb8;
    border-bottom: 1px solid #8a8886;
}
.group {
    display: flex;
    flex-direction: column;
    flex: none;
    position: relative;
    border-right: 1px solid #666;
}
.group-name {
    margin-top: auto;
    line-height: 8px;
    text-align: center;
}
.group-name:has(.launcher) {
    padding-right: 14px;
}
.launcher {
    position: absolute;
    right: 3px;
    bottom: 0;
}
.group-body {
    display: flex;
}
.big {
    flex-direction: column;
    justify-content: flex-start;
    padding-top: 3px;
    line-height: 16px;
}
.big > svg:first-child {
    height: 30px;
    margin-bottom: 4px;
}
.big > svg:last-child {
    margin-top: 5px;
}
.off {
    color: #666;
}
.stack {
    display: flex;
    flex-direction: column;
}
.small {
    justify-content: flex-start;
    gap: 3px;
    height: 24px;
}
.clipboard {
    width: 165px;
}
.paste {
    width: 38px;
    margin: 0 5px 0 10px;
}
.font {
    width: 296px;
}
.para {
    width: 247px;
}
.rows {
    display: flex;
    flex-direction: column;
    gap: 8px;
    padding: 7px 0 0 7px;
}
.row {
    display: flex;
    align-items: center;
    height: 24px;
}
.tool {
    flex: none;
    width: 24px;
    height: 24px;
}
.wide {
    width: 26px;
}
.sep {
    width: 1px;
    height: 22px;
    margin: 0 3px;
    background-color: #999;
}
.combo {
    position: relative;
    height: 23px;
}
.combo select {
    width: 100%;
    height: 100%;
    padding: 0 2px;
    appearance: none;
    border: 1px solid #888;
    border-radius: 0;
    background-color: #d4d2d0;
    font-size: 12px;
    line-height: 16px;
}
.combo svg {
    position: absolute;
    right: 2px;
    top: 9px;
}
.combo-font {
    width: 111px;
    margin-right: 2px;
}
.combo-size {
    width: 43px;
    margin-right: 2px;
}
.glyph b {
    font-weight: 400;
}
.big-a {
    font-size: 17px;
}
.small-a {
    font-size: 15px;
}
.up {
    margin-bottom: 10px;
}
.case {
    width: 38px;
    gap: 3px;
    font-size: 13px;
}
.clear-fmt svg {
    margin: 8px 0 0 -4px;
}
.bold {
    font-size: 14px;
    font-weight: 700;
}
.italic {
    font-family: "Liberation Serif", serif;
    font-size: 15px;
    font-style: italic;
}
.under {
    font-size: 13px;
    text-decoration: underline;
    text-underline-offset: 2px;
}
.strike {
    font-size: 12px;
    text-decoration: line-through;
}
.bold sub, .bold sup {
    color: #2b63b5;
    font-size: 8px;
    font-weight: 400;
}
.bold sub {
    margin-top: 12px;
}
.bold sup {
    margin-bottom: 12px;
}
.effect {
    color: #fff;
    font-size: 17px;
    font-weight: 700;
    -webkit-text-stroke: 1px #2b63b5;
    text-shadow: 0 0 2px #5ea3dc;
}
.color-a {
    font-size: 14px;
    line-height: 12px;
    background: linear-gradient(#000, #000) 5px 16px / 16px 4px no-repeat;
    padding-bottom: 8px;
}
.sort span {
    display: flex;
    flex-direction: column;
}
.sort b {
    font-size: 9px;
    font-weight: 600;
    line-height: 10px;
}
.sort b:first-child {
    color: #2b63b5;
}
.pressed {
    border: 1px solid #666;
    background-color: #a19f9d;
}

/* Style gallery */
.styles {
    width: 470px;
}
.gallery {
    display: flex;
    height: 60px;
    margin: 2px 10px 0 9px;
    padding-left: 1px;
    border: 1px solid #a19f9d;
    background-color: #d4d4d4;
}
.style {
    width: 72px;
    height: 56px;
    margin-top: 1px;
    border: 2px solid transparent;
    padding: 2px;
}
.style.selected {
    border-color: #666;
    background-color: #a19f9d;
}
.style span {
    display: flex;
    flex-direction: column;
    width: 64px;
    height: 48px;
    background-color: #fff;
    color: #555;
}
.style em {
    height: 33px;
    margin: 0 3px;
    overflow: hidden;
    color: #000;
    font-size: 12px;
    font-style: normal;
    line-height: 33px;
    text-align: left;
}
.style .s1 {
    color: #2f5496;
    font-size: 18px;
    font-weight: 300;
}
.style .s2 {
    color: #2f5496;
    font-size: 14px;
    font-weight: 300;
}
.style .s3 {
    color: #1f3763;
    font-size: 13px;
}
.style .s4 {
    color: #2f5496;
    font-style: italic;
}
.gallery-nav {
    display: flex;
    flex-direction: column;
    width: 15px;
    margin: -1px -1px -1px auto;
}
.gallery-nav button {
    flex: 1;
    border: 1px solid #666;
}
.gallery-nav .dim {
    border-color: #a19f9d;
    color: #777;
}
.callout {
    position: absolute;
    left: 432px;
    top: 58px;
    z-index: 2;
    width: 61px;
    height: 55px;
    border: 5px solid #ed1c24;
}
.editing {
    width: 87px;
    padding-left: 12px;
}
.editing .stack {
    margin-top: -1px;
}
.editing .small {
    height: 23px;
}
.editing .group-name {
    padding-right: 12px;
}
.far {
    margin-left: 8px;
}
.acrobat {
    width: 253px;
}
.acrobat .big > svg {
    color: #1b5cc7;
    margin: 3px 0 1px 6px;
}
.a1 {
    width: 94px;
}
.a2 {
    width: 83px;
}
.a3 {
    width: 74px;
}
.voice {
    width: 58px;
}
.sens {
    width: 74px;
}
.editor {
    width: 58px;
}
.reuse {
    width: 64px;
}
.addins {
    width: 63px;
}
.collapse {
    align-self: flex-end;
    margin: 0 6px 0 auto;
}

/* Document area */
.work {
    display: grid;
    grid-template-columns: 1fr 447px;
    flex: 1;
    min-height: 0;
}
.doc {
    display: flex;
    flex-direction: column;
    min-width: 0;
    min-height: 0;
    padding-bottom: 1px;
}
.ruler-row {
    display: flex;
    flex: none;
    height: 20px;
    background: linear-gradient(#4a4d4b, #666 4px);
}
.tab-stop {
    flex: none;
    width: 24px;
    margin-right: 34px;
    border: 1px solid #444;
    background-color: #555;
}
.tab-stop i {
    width: 6px;
    height: 6px;
    border: solid #eee;
    border-width: 0 0 2px 2px;
}
.ruler-h {
    flex: 1;
    min-width: 0;
}
.nums {
    fill: #fff;
    font-size: 10px;
    font-weight: 600;
    text-anchor: middle;
}
.doc-body {
    display: flex;
    flex: 1;
    min-height: 0;
}
.ruler-v {
    height: calc(100% - 16px);
    margin: 32px 44px 0 5px;
    overflow: visible;
}
.page {
    flex: 1;
    margin-top: 35px;
    padding: 203px 0 0 172px;
    background-color: #fff;
    color: #2f5496;
}
.page h1, .page h2, .page h3, .page h4 {
    margin: 0;
    font-weight: 350;
    line-height: 49px;
}
.page h1 {
    display: flex;
    margin-bottom: 10px;
    font-size: 34px;
    font-weight: 300;
    line-height: 46px;
}
.page h2 {
    font-size: 27px;
}
.page h3 {
    color: #1f3763;
    font-size: 25px;
}
.page h4 {
    font-size: 24px;
    font-style: italic;
}
.cursor {
    width: 1px;
    height: 46px;
    margin-left: 1px;
    background-color: #000;
}
.scroll-v {
    display: flex;
    flex-direction: column;
    width: 18px;
    padding: 6px 2px 4px 2px;
}
.scroll-v button, .scroll-h button {
    flex: none;
    width: 14px;
    height: 14px;
    border: 1px solid #888;
    background-color: #d4d4d4;
}
.scroll-v .thumb {
    height: 323px;
    margin-top: 1px;
}
.thumb {
    border: 1px solid #888;
    background-color: #d4d4d4;
}
.track {
    flex: 1;
    background-color: #444;
}
.scroll-h {
    display: flex;
    flex: none;
    height: 14px;
    margin: 2px 21px 0 26px;
}
.scroll-h .thumb {
    width: 1290px;
    margin-left: 1px;
}

/* Styles pane */
.pane {
    display: flex;
    flex-direction: column;
    position: relative;
    padding: 0 15px 18px;
    border-left: 1px solid #444;
    color: #fff;
}
.pane::before {
    content: "";
    position: absolute;
    inset: -4px 0 10px -8px;
    border: 5px solid #ed1c24;
    pointer-events: none;
}
.pane-head {
    display: flex;
    align-items: center;
    gap: 29px;
    height: 50px;
    padding: 2px 2px 0 0;
}
.pane-head h2 {
    flex: 1;
    margin: 0;
    font-size: 20px;
    font-weight: 300;
}
.pane-head button {
    margin-bottom: 8px;
}
.style-list {
    display: flex;
    flex-direction: column;
    gap: 2px;
    flex: 1;
    margin: 0;
    padding: 1px 24px 0 0;
    background-color: #fff;
    color: #000;
    list-style: none;
}
.style-list li {
    display: flex;
    align-items: center;
    justify-content: space-between;
    height: 20px;
    padding: 0 4px 0 8px;
}
.style-list .selected {
    padding: 0 2px 0 6px;
    border: 2px solid #2b579a;
}
.style-list b, .style-list u {
    color: #777;
    font-size: 12px;
    font-weight: 700;
}
.style-list u {
    font-size: 10px;
    text-underline-offset: 2px;
}
.check {
    display: flex;
    align-items: center;
    gap: 5px;
    height: 22px;
}
.check input {
    appearance: none;
    width: 13px;
    height: 13px;
    margin: 0;
    border: 1px solid #888;
    background-color: #d4d4d4;
}
.pane-btns {
    display: flex;
    gap: 9px;
    height: 29px;
    padding-top: 3px;
    color: #222;
}
.pane-btns button {
    height: 26px;
    border: 1px solid #888;
    background-color: #d4d4d4;
}
.pane-btns .sq {
    width: 26px;
}
.pane-btns .options {
    width: 69px;
    height: 24px;
}

/* Status bar */
.status {
    display: flex;
    align-items: center;
    flex: none;
    height: 22px;
    padding: 0 5px 0 8px;
    border-top: 1px solid #444;
    background-color: #bfbbb8;
}
.pages {
    width: 76px;
}
.words {
    width: 66px;
}
.proof {
    margin-right: 20px;
}
.status-right {
    display: flex;
    align-items: center;
    align-self: stretch;
    margin-left: auto;
}
.access, .display, .focus {
    gap: 2px;
}
.display {
    margin-right: 17px;
}
.focus {
    margin-right: 12px;
}
.view {
    width: 40px;
    height: 21px;
}
.view.on {
    background-color: #a19f9d;
}
.zoom-btn {
    width: 13px;
}
.view + .zoom-btn {
    margin-left: 4px;
}
.zoom {
    width: 100px;
    height: 12px;
    margin: 0 2px;
    appearance: none;
    background: linear-gradient(#222, #222) 0 6px / 100% 1px no-repeat, linear-gradient(#222, #222) 50px 3px / 1px 6px no-repeat;
}
.zoom::-webkit-slider-thumb {
    appearance: none;
    width: 5px;
    height: 12px;
    background-color: #777;
}
.percent {
    width: 40px;
    text-align: right;
}
.taskbar {
    flex: none;
    height: 3px;
    display: flex;
    background-color: #222;
}
.window {
    width: 288px;
    margin-left: 48px;
    background-color: #f3f3f3;
}
.app {
    width: 47px;
    margin-left: 198px;
    background-color: #c87a3a;
}
```
